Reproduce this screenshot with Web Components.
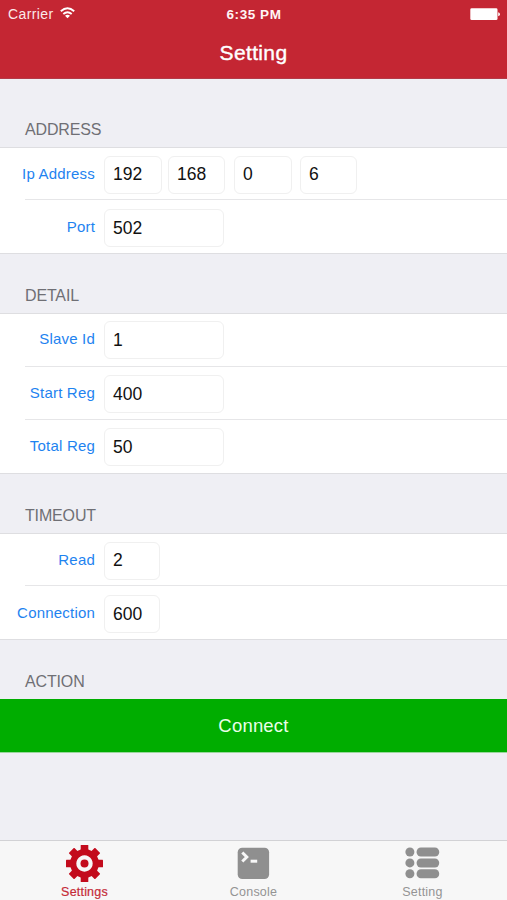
<!DOCTYPE html>
<html lang="en">
<head>
<meta charset="utf-8">
<title>Setting</title>
<style>
html,body{margin:0;height:100%}
body{font-family:"Liberation Sans",Arial,sans-serif;background:#efeff4;overflow:hidden}
</style>
</head>
<body>
<settings-screen></settings-screen>
<script>
const define = (name, html) => customElements.define(name, class extends HTMLElement {
  constructor() {
    super();
    this.attachShadow({mode: 'open'});
  }
  connectedCallback() {
    const t = document.createElement('template');
    t.innerHTML = typeof html === 'function' ? html(this) : html;
    this.shadowRoot.replaceChildren(t.content.cloneNode(true));
  }
});

define('status-bar', `
<style>
:host{display:grid;grid-template-columns:1fr auto 1fr;align-items:center;height:28px;padding:0 7px 0 8px;color:#fbe9ea;font-size:14px}
.left{display:flex;align-items:center;gap:6px;letter-spacing:.4px}
.left svg{margin-top:-2px}
.time{font-weight:bold;font-size:13.5px;letter-spacing:.55px;color:#fff5f5}
.battery{justify-self:end;display:block}
</style>
<div class="left"><span>Carrier</span>
<svg width="15" height="12" viewBox="0 0 15 12" fill="none" stroke="#fff" stroke-width="1.9"><path d="M.8 4.2Q7.5-1.8 14.2 4.2M3.3 7Q7.5 3.4 11.7 7"/><path d="M5 8.7Q7.5 6.8 10 8.7L7.5 11.3Z" fill="#fff" stroke="none"/></svg></div>
<span class="time">6:35 PM</span>
<svg class="battery" width="30" height="13" viewBox="0 0 30 13"><rect x=".3" y=".3" width="27.2" height="11.8" rx="1.4" fill="#fff"/><path d="M28.2 4.2Q30 4.6 30 6.2T28.2 8.2Z" fill="#fff"/></svg>`);

define('nav-bar', `
<style>
:host{display:flex;flex-direction:column;height:79px;box-sizing:border-box;background:#c42633;border-bottom:1px solid #b43a48}
.title{flex:1;display:flex;align-items:center;justify-content:center;color:#fff;font-size:21px;letter-spacing:.35px;-webkit-text-stroke:.4px #fff;padding-bottom:1px}
</style>
<status-bar></status-bar><div class="title"><slot></slot></div>`);

define('setting-group', e => `
<style>
:host{display:block}
.head{height:${e.hasAttribute('first') ? 68 : 59}px;box-sizing:border-box;display:flex;align-items:flex-end;padding:0 0 8.5px 25px;color:#6f6f75;font-size:16px;letter-spacing:-.15px;line-height:18px}
.rows{border-top:1px solid #dedee1;border-bottom:1px solid #dedee1;background:#fff;box-sizing:border-box;height:${e.getAttribute('height')}px;display:flex;flex-direction:column}
:host([plain]) .rows{border-color:#00ad00 #00ad00 #9bd69d}
::slotted(*){flex:1 1 53px}
</style>
<div class="head">${e.getAttribute('heading')}</div><div class="rows"><slot></slot></div>`);

define('setting-row', e => `
<style>
:host{display:flex;align-items:center;position:relative;box-sizing:border-box}
:host([low]){padding-top:2px}
:host([high]){padding-bottom:2px}
:host(:not(:last-child))::after{content:"";position:absolute;left:25px;right:0;bottom:0;height:1px;background:#e6e6e8}
.label{width:95px;text-align:right;color:#1e83f0;font-size:15px;letter-spacing:.2px;margin-right:9px;padding-bottom:2px;white-space:nowrap}
.fields{display:flex;gap:${e.getAttribute('gap') || 0}px;padding-top:1px}
</style>
<div class="label">${e.getAttribute('label')}</div><div class="fields"><slot></slot></div>`);

define('value-field', e => `
<style>
:host{display:flex;align-items:center;box-sizing:border-box;width:${e.getAttribute('width')}px;height:38px;border:1px solid #f0f0f0;border-radius:6px;padding-left:8px;color:#111;font-size:17.5px}
</style><slot></slot>`);

define('action-button', `
<style>
:host{display:flex;align-items:center;justify-content:center;background:#00ad00;color:#e9ffe9;font-size:18.5px;letter-spacing:.2px}
</style><slot></slot>`);

const icons = {
  gear: `<g fill="#c30b1c"><path fill-rule="evenodd" d="M18.5 4a14.5 14.5 0 1 0 .01 0ZM18.5 10.3a8.2 8.2 0 1 1-.01 0Z"/>${[0,45,90,135,180,225,270,315].map(a => `<rect x="14.7" y="0" width="7.6" height="8" rx=".5" transform="rotate(${a} 18.5 18.5)"/>`).join('')}<circle cx="18.5" cy="18.5" r="4"/></g>`,
  console: `<rect x="2.7" y="2.7" width="31.4" height="31.4" rx="4.5" fill="#8f8f8f"/><path d="M7.3 7.5L11.8 12L7.3 16.5" fill="none" stroke="#f7f7f7" stroke-width="3"/><path d="M15.6 16.2h6.6" stroke="#f7f7f7" stroke-width="3"/>`,
  list: `<g fill="#8f8f8f">${[7,17.9,28.8].map(y => `<circle cx="5.9" cy="${y}" r="4.5"/><rect x="12.6" y="${y-4.5}" width="22.6" height="9" rx="4.3"/>`).join('')}</g>`
};
define('tab-item', e => `
<style>
:host{flex:1;display:flex;flex-direction:column;align-items:center;padding-top:4px;color:#949494;font-size:12.5px;line-height:14px;letter-spacing:.2px}
:host([active]){color:#c52b38;-webkit-text-stroke:.2px #c52b38}
svg{display:block;margin-bottom:3px}
</style>
<svg width="37" height="37" viewBox="0 0 37 37">${icons[e.getAttribute('icon')]}</svg><slot></slot>`);

define('tab-bar', `
<style>:host{display:flex;height:60px;box-sizing:border-box;border-top:1px solid #d2d2d5;background:#f7f7f7}</style><slot></slot>`);

define('settings-screen', `
<style>
:host{display:flex;flex-direction:column;height:100vh;background:#efeff4}
main{flex:1}
</style>
<nav-bar>Setting</nav-bar>
<main>
<setting-group heading="ADDRESS" height="107" first>
<setting-row label="Ip Address" gap="8"><value-field width="58">192</value-field><value-field width="57" style="margin-left:-2px">168</value-field><value-field width="58" style="margin-left:1px">0</value-field><value-field width="57">6</value-field></setting-row>
<setting-row label="Port" low><value-field width="120">502</value-field></setting-row>
</setting-group>
<setting-group heading="DETAIL" height="161">
<setting-row label="Slave Id" high><value-field width="120">1</value-field></setting-row>
<setting-row label="Start Reg"><value-field width="120">400</value-field></setting-row>
<setting-row label="Total Reg"><value-field width="120">50</value-field></setting-row>
</setting-group>
<setting-group heading="TIMEOUT" height="107">
<setting-row label="Read"><value-field width="56">2</value-field></setting-row>
<setting-row label="Connection" low><value-field width="56">600</value-field></setting-row>
</setting-group>
<setting-group heading="ACTION" height="54" plain><action-button>Connect</action-button></setting-group>
</main>
<tab-bar><tab-item icon="gear" active>Settings</tab-item><tab-item icon="console">Console</tab-item><tab-item icon="list">Setting</tab-item></tab-bar>`);
</script>
</body>
</html>
